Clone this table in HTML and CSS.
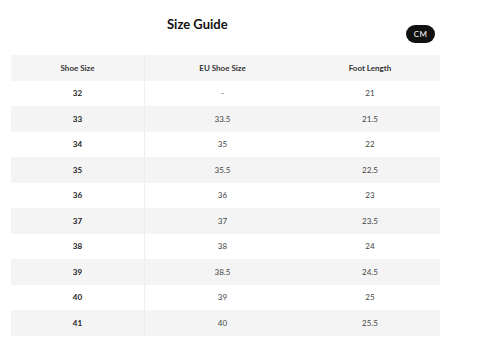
FILE: index.html
```html
<!DOCTYPE html>
<html lang="en">
<head>
  <meta charset="UTF-8" />
  <meta name="viewport" content="width=device-width, initial-scale=1" />
  <title>Size Guide</title>
  <link rel="stylesheet" href="styles.css">
</head>
<body>
  <div class="guide">
    <div class="guide-top">
      <h2 class="guide-title">Size Guide</h2>
      <button class="unit-toggle">CM</button>
    </div>

    <table class="size-table">
      <thead>
        <tr>
          <th class="col-size">Shoe Size</th>
          <th class="col-eu">EU Shoe Size</th>
          <th class="col-foot">Foot Length</th>
        </tr>
      </thead>
      <tbody>
        <tr><td>32</td><td>-</td><td>21</td></tr>
        <tr><td>33</td><td>33.5</td><td>21.5</td></tr>
        <tr><td>34</td><td>35</td><td>22</td></tr>
        <tr><td>35</td><td>35.5</td><td>22.5</td></tr>
        <tr><td>36</td><td>36</td><td>23</td></tr>
        <tr><td>37</td><td>37</td><td>23.5</td></tr>
        <tr><td>38</td><td>38</td><td>24</td></tr>
        <tr><td>39</td><td>38.5</td><td>24.5</td></tr>
        <tr><td>40</td><td>39</td><td>25</td></tr>
        <tr><td>41</td><td>40</td><td>25.5</td></tr>
      </tbody>
    </table>
  </div>
</body>
</html>
```

FILE: styles.css
```css
body {
  margin: 0;
  padding: 0;
  background: #fff;
  color: #222;
  font-family: Lato, "Open Sans", sans-serif;
}

.guide {
  width: 428px;
  padding: 0 11px;
}

.guide-top {
  display: flex;
  align-items: flex-start;
  height: 55px;
}

.guide-title {
  margin: 16px 0 0 156px;
  font-size: 13px;
  font-weight: 700;
  color: #111;
  line-height: 16px;
}

.unit-toggle {
  margin: 25px 4px 0 auto;
  width: 29px;
  height: 18px;
  padding: 0;
  border: none;
  border-radius: 9px;
  background: #111;
  color: #fff;
  font-family: inherit;
  font-size: 8px;
  font-weight: 400;
  letter-spacing: 0.4px;
}

.size-table {
  width: 428px;
  border-collapse: collapse;
  table-layout: fixed;
  font-size: 8px;
}

.size-table th,
.size-table td {
  height: 25.5px;
  padding: 0;
  text-align: center;
  vertical-align: middle;
}

.size-table th {
  background: #f5f5f5;
  font-weight: 700;
  color: #333;
}

.size-table td {
  color: #444;
}

.col-size { width: 133px; }
.col-eu { width: 155px; }
.col-foot { width: 140px; }

.size-table th:first-child,
.size-table td:first-child {
  border-right: 1px solid #eeeeee;
}

.size-table td:first-child {
  font-weight: 700;
  color: #222;
}

.size-table tbody tr:nth-child(even) td {
  background: #f4f4f4;
}
```
